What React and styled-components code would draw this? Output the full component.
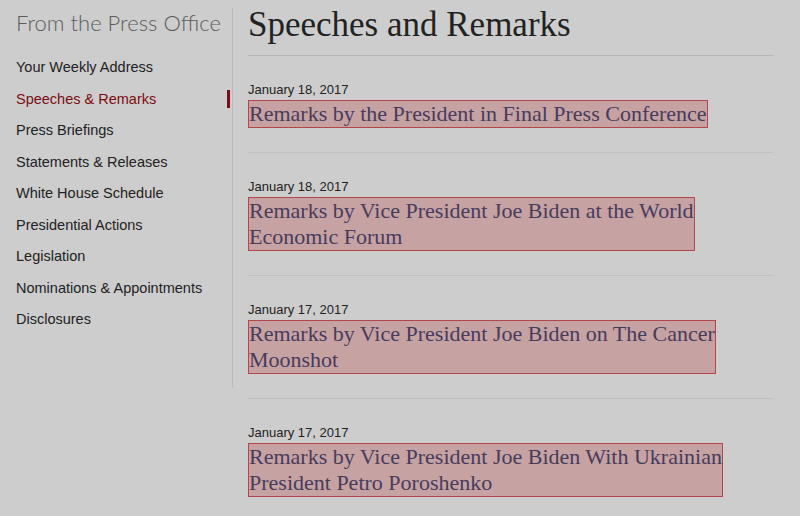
import React from "react";
import styled, { createGlobalStyle } from "styled-components";

const nav = [
  "Your Weekly Address",
  "Speeches & Remarks",
  "Press Briefings",
  "Statements & Releases",
  "White House Schedule",
  "Presidential Actions",
  "Legislation",
  "Nominations & Appointments",
  "Disclosures"
];

const posts = [
  { date: "January 18, 2017", lines: ["Remarks by the President in Final Press Conference"] },
  { date: "January 18, 2017", lines: ["Remarks by Vice President Joe Biden at the World", "Economic Forum"] },
  { date: "January 17, 2017", lines: ["Remarks by Vice President Joe Biden on The Cancer", "Moonshot"] },
  { date: "January 17, 2017", lines: ["Remarks by Vice President Joe Biden With Ukrainian", "President Petro Poroshenko"] }
];

export default function App() {
  return (
    <>
      <GlobalStyle />
      <Page>
        <Sidebar>
          <SideHeading>From the Press Office</SideHeading>
          <NavList>
            {nav.map((label, i) => (
              <NavItem key={label} $active={i === 1}>
                {label}
              </NavItem>
            ))}
          </NavList>
        </Sidebar>

        <Main>
          <Title>Speeches and Remarks</Title>
          {posts.map((post, i) => (
            <Post key={i}>
              <PostDate>{post.date}</PostDate>
              <PostLink href="#">
                {post.lines.map((line, j) => (
                  <React.Fragment key={j}>
                    {j > 0 && <br />}
                    {line}
                  </React.Fragment>
                ))}
              </PostLink>
            </Post>
          ))}
        </Main>
      </Page>
    </>
  );
}

const GlobalStyle = createGlobalStyle`
  html, body {
    margin: 0;
    background: #cdcdcd;
  }
  body {
    font-family: "Liberation Sans", Arial, sans-serif;
  }
`;

const Page = styled.div`
  display: flex;
  align-items: flex-start;
  width: 800px;
  height: 516px;
  overflow: hidden;
`;

const Sidebar = styled.aside`
  width: 216px;
  height: 380px;
  margin-top: 8px;
  padding-left: 16px;
  border-right: 1px solid #bababa;
  flex-shrink: 0;
`;

const SideHeading = styled.h2`
  margin: 0;
  font-family: "Lato", "Open Sans", sans-serif;
  font-weight: 300;
  font-size: 22px;
  line-height: 30px;
  color: #5c5c5c;
  white-space: nowrap;
`;

const NavList = styled.ul`
  list-style: none;
  margin: 14px 0 0;
  padding: 0;
`;

const NavItem = styled.li`
  position: relative;
  font-size: 14.5px;
  line-height: 31.5px;
  color: ${(p) => (p.$active ? "#7d0c12" : "#222")};

  &::after {
    content: "";
    display: ${(p) => (p.$active ? "block" : "none")};
    position: absolute;
    right: 2px;
    top: 6px;
    width: 3px;
    height: 18px;
    background: #7d0c12;
  }
`;

const Main = styled.main`
  width: 525px;
  margin-left: 15px;
`;

const Title = styled.h1`
  margin: 0;
  padding-top: 3px;
  height: 56px;
  box-sizing: border-box;
  font-family: "Liberation Serif", "Times New Roman", serif;
  font-weight: 400;
  font-size: 35px;
  line-height: 44px;
  color: #222;
  border-bottom: 1px solid #b6b6b6;
`;

const Post = styled.article`
  padding: 26px 0 24px;
  border-bottom: 1px solid #c0c0c0;
`;

const PostDate = styled.div`
  font-size: 13px;
  line-height: 16px;
  color: #222;
  margin-bottom: 2px;
`;

const PostLink = styled.a`
  display: inline-block;
  font-family: "Liberation Serif", "Times New Roman", serif;
  font-size: 22px;
  line-height: 26px;
  color: #463c5c;
  text-decoration: none;
  background: #c7a2a3;
  border: 1px solid #b3464a;
`;
